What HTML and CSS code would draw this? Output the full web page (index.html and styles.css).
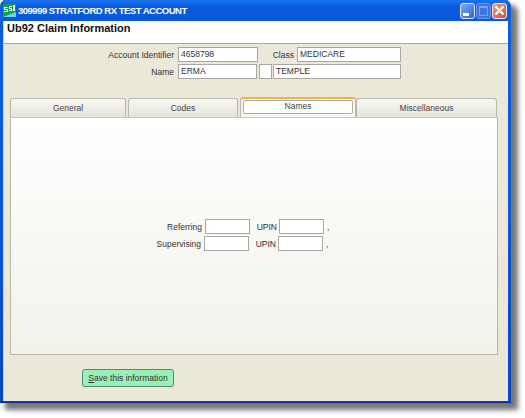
FILE: index.html
```html
<!DOCTYPE html>
<html lang="en">
<head>
    <meta charset="UTF-8">
    <title>Ub92 Claim Information</title>
    <link rel="stylesheet" href="styles.css">
</head>
<body>
    <div class="window">
        <div class="titlebar">
            <svg class="app-icon" width="13" height="13" viewBox="0 0 13 13">
                <rect width="13" height="13" fill="#12a050"/>
                <path d="M1 3h4v1H2v1h3v3H1V7h3V6H1zM6 2h3v1H7v1h2v3H6V6h2V5H6zM10 1h2v6h-2z" fill="#fff"/>
                <path d="M0 13l13-5v5z" fill="#7ad0e8"/>
            </svg>
            <span class="title">309999 STRATFORD RX TEST ACCOUNT</span>
            <div class="controls">
                <div class="ctl min"><span></span></div>
                <div class="ctl max"><span></span></div>
                <div class="ctl close">
                    <svg width="11" height="11" viewBox="0 0 11 11"><path d="M1.5 1.5l8 8M9.5 1.5l-8 8" stroke="#fff" stroke-width="2"/></svg>
                </div>
            </div>
        </div>
        <div class="client">
            <div class="header">Ub92 Claim Information</div>
            <div class="account">
                <div class="row">
                    <label class="lbl lbl-account">Account Identifier</label>
                    <div class="field f-account">4658798</div>
                    <label class="lbl lbl-class">Class</label>
                    <div class="field f-class">MEDICARE</div>
                </div>
                <div class="row">
                    <label class="lbl lbl-account">Name</label>
                    <div class="field f-first">ERMA</div>
                    <div class="field f-mi"></div>
                    <div class="field f-last">TEMPLE</div>
                </div>
            </div>
            <div class="tabs">
                <div class="tab t-general">General</div>
                <div class="tab t-codes">Codes</div>
                <div class="tab active t-names"><span>Names</span></div>
                <div class="tab t-misc">Miscellaneous</div>
            </div>
            <div class="panel">
                <div class="ref-row">
                    <label class="lbl lbl-ref">Referring</label>
                    <div class="field f-ref"></div>
                    <label class="lbl lbl-upin">UPIN</label>
                    <div class="field f-ref"></div>
                    <span class="comma">,</span>
                </div>
                <div class="ref-row second">
                    <label class="lbl lbl-ref">Supervising</label>
                    <div class="field f-ref"></div>
                    <label class="lbl lbl-upin">UPIN</label>
                    <div class="field f-ref"></div>
                    <span class="comma">,</span>
                </div>
            </div>
            <div class="footer">
                <button class="save"><u>S</u>ave this information</button>
            </div>
        </div>
    </div>
</body>
</html>
```

FILE: styles.css
```css
body {
    margin: 0;
    min-height: 418px;
    background: #fff;
    font-family: "Liberation Sans", Arial, sans-serif;
    font-size: 8.5px;
    color: #333;
}
.window {
    width: 511px;
    height: 403px;
    box-sizing: border-box;
    display: flex;
    flex-direction: column;
    background: linear-gradient(#0a5fe0, #0a54d8 60%, #0846c0);
    border-radius: 6px 6px 0 0;
    padding: 0 3px 1px 3px;
    border-bottom: 1px solid #0a2a90;
    box-shadow: 6px 6px 5px 1px #777;
}
.titlebar {
    height: 21px;
    flex: none;
    display: flex;
    align-items: center;
    color: #fff;
    background: linear-gradient(#1a74ee, #0a5ae0 30%, #0a58dc);
}
.app-icon {
    margin-right: 2px;
}
.title {
    font-size: 9.5px;
    font-weight: bold;
    letter-spacing: -0.5px;
    white-space: nowrap;
}
.controls {
    margin-left: auto;
    display: flex;
    gap: 1px;
    margin-right: 1px;
}
.ctl {
    width: 13px;
    height: 14px;
    border: 1px solid #dfe8ff;
    border-radius: 3px;
    display: flex;
    align-items: center;
    justify-content: center;
    position: relative;
}
.min {
    background: linear-gradient(135deg, #7da6f5, #2f62dc);
}
.min span {
    width: 6px;
    height: 3px;
    background: #fff;
    position: absolute;
    left: 2px;
    bottom: 2px;
}
.max {
    background: #3f72e4;
    border-color: #6f98ee;
}
.max span {
    width: 7px;
    height: 7px;
    border: 1px solid #7ba0ee;
    border-top-width: 2px;
}
.close {
    background: linear-gradient(135deg, #f0a080, #d8502a);
}
.client {
    flex: 1;
    background: #ebe8d9;
    display: flex;
    flex-direction: column;
    min-height: 0;
    border-left: 1px solid #d8d4c0;
}
.header {
    height: 22px;
    flex: none;
    background: #fff;
    border-bottom: 1px solid #aaa99a;
    padding-left: 3px;
    font-size: 11px;
    font-weight: bold;
    color: #111;
    line-height: 15px;
}
.account {
    flex: none;
    margin-top: 3px;
    display: flex;
    flex-direction: column;
    gap: 2px;
}
.row {
    display: flex;
    align-items: center;
    height: 15px;
}
.lbl {
    text-align: right;
    white-space: nowrap;
}
.field {
    box-sizing: border-box;
    height: 15px;
    line-height: 13px;
    background: #fff;
    border: 1px solid #a8a8a0;
    padding-left: 2px;
    color: #333;
}
.lbl-account {
    width: 170px;
    margin-right: 4px;
}
.lbl-class {
    width: 36px;
    margin-right: 3px;
}
.f-account {
    width: 80px;
}
.f-class {
    width: 104px;
}
.f-first {
    width: 79px;
}
.f-mi {
    width: 13px;
    margin-left: 2px;
}
.f-last {
    width: 128px;
    margin-left: 1px;
}
.tabs {
    flex: none;
    display: flex;
    margin: 18px 0 0 6px;
    height: 20px;
    align-items: flex-end;
}
.tab {
    box-sizing: border-box;
    height: 19px;
    background: linear-gradient(#f8f8f4, #e6e4d8);
    border: 1px solid #b8b8a8;
    border-bottom: none;
    border-radius: 3px 3px 0 0;
    text-align: center;
    line-height: 19px;
    color: #444;
}
.t-general {
    width: 116px;
    margin-right: 2px;
}
.t-codes {
    width: 110px;
    margin-right: 2px;
}
.t-names {
    width: 116px;
}
.t-misc {
    width: 141px;
}
.tab.active {
    height: 20px;
    background: #f5f4ee;
    border-top: 2px solid #eeb050;
    padding: 1px 2px 0;
    line-height: 13px;
}
.tab.active span {
    display: block;
    height: 14px;
    box-sizing: border-box;
    background: #fff;
    border: 1px solid #b0b0a0;
    border-radius: 2px;
    line-height: 11px;
}
.panel {
    flex: none;
    box-sizing: border-box;
    width: 488px;
    height: 238px;
    margin-left: 6px;
    padding-top: 101px;
    background: linear-gradient(#fff, #f2f1ea);
    border: 1px solid #b8b8a8;
    border-top-color: #c8c8b8;
    display: flex;
    flex-direction: column;
    gap: 2px;
}
.ref-row {
    display: flex;
    align-items: center;
    height: 15px;
}
.second {
    margin-left: -1px;
}
.lbl-ref {
    width: 191px;
    margin-right: 3px;
}
.lbl-upin {
    width: 27px;
    margin-right: 2px;
}
.f-ref {
    width: 45px;
}
.comma {
    margin-left: 3px;
}
.footer {
    flex: none;
    padding: 14px 0 0 78px;
}
.save {
    box-sizing: border-box;
    width: 92px;
    height: 18px;
    padding: 0;
    background: #9af0b4;
    border: 1px solid #4c8c70;
    border-radius: 3px;
    font-family: inherit;
    font-size: 8.5px;
    color: #333;
}
```
